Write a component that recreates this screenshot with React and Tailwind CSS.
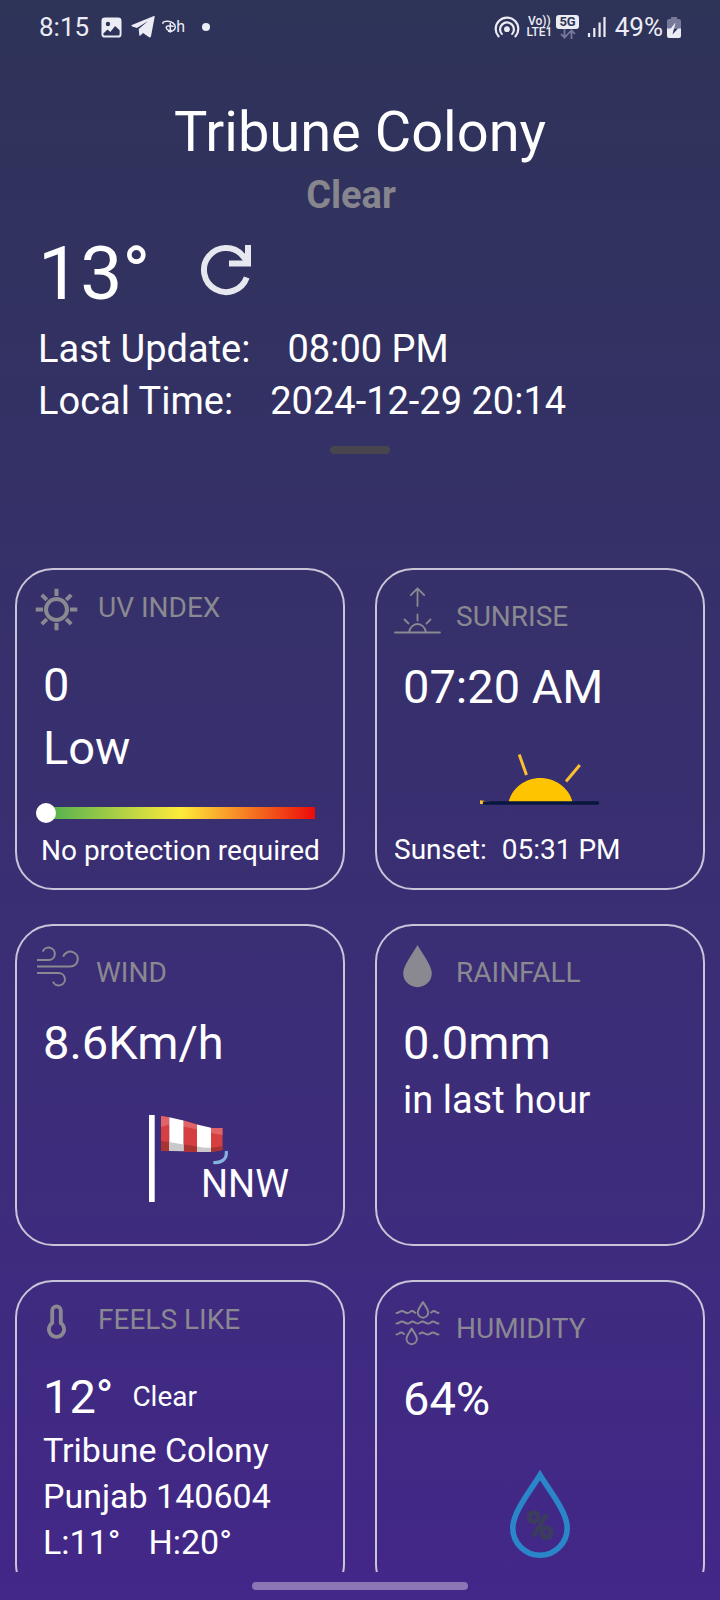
const GREY = "#8a8890";

function StatusBar() {
  return (
    <header className="flex items-center justify-between pl-[39px] pr-[39px] pt-[11px] text-[26px] leading-[32px] text-[#ececf4]">
      <div className="flex items-center">
        <time>8:15</time>
        <svg className="ml-[12px] size-[21px]" viewBox="0 0 22 22" aria-hidden="true">
          <path
            fillRule="evenodd"
            fill="currentColor"
            d="M4 0.5h14a3.500 3.500 0 0 1 3.500 3.500v14a3.500 3.500 0 0 1-3.500 3.500H4A3.500 3.500 0 0 1 .5 18V4A3.500 3.500 0 0 1 4 .5zM2.500 16.500v.8L6.800 13.200l3 2.600 5-6.300 4.700 4.500v4.200a1.300 1.300 0 0 1-1.300 1.300H3.800a1.300 1.300 0 0 1-1.300-1.300zM7.300 5a2.300 2.300 0 1 0 0 4.600 2.300 2.300 0 0 0 0-4.600z"
          />
        </svg>
        <svg className="ml-[9px] h-[22px] w-[24px]" viewBox="0 0 24 22" aria-hidden="true">
          <path
            fill="currentColor"
            d="M23.700.8 20 20.200c-.3 1.200-1.200 1.500-2.200.9l-5.700-4.200-2.700 2.700c-.4.3-1 .2-1.100-.4l-.6-6.200 9.400-8-11.200 7-4.700-1.600c-1.200-.4-1.200-1.200.2-1.700L22.300.2c1-.4 1.600 0 1.400.6z"
          />
        </svg>
        <div className="ml-[7px] flex items-center" role="img" aria-label="Disney+ Hotstar">
          <svg className="h-[14px] w-[14px]" viewBox="0 0 14 14" aria-hidden="true">
            <g fill="none" stroke="currentColor" strokeLinecap="round">
              <path strokeWidth="1.500" d="M1 3.200C.6 1.800 3 1 6 1.300c4.500.4 7.600 3 7.200 6.300-.3 2.700-3.600 4.300-6.500 3.700" />
              <path strokeWidth="1.500" d="M8.300 3.500v8.500M11 6.200C7 5.200 4.200 6 4.200 7.500c0 1.800 2.400 3.300 5 3.100" />
            </g>
          </svg>
          <span className="text-[16px] leading-[20px]">h</span>
        </div>
        <span className="ml-[17px] size-2 rounded-full bg-current" />
      </div>
      <div className="flex items-center">
        <svg className="h-[22px] w-[26px]" viewBox="0 0 26 22" aria-hidden="true">
          <g fill="none" stroke="currentColor" strokeWidth="2.200" strokeLinecap="round">
            <path d="M4.500 20.300a11.300 11.300 0 1 1 17 0" />
            <path d="M7.800 17.900a6.900 6.900 0 1 1 10.400 0" />
          </g>
          <circle cx="13" cy="13.200" r="2.900" fill="currentColor" />
        </svg>
        <div className="ml-[6px] flex w-[26px] flex-col items-center text-[12px] font-medium leading-[11px]">
          <span>Vo))</span>
          <span>LTE1</span>
        </div>
        <div className="ml-[4px] flex flex-col items-center">
          <span className="rounded-[3px] bg-[#ececf4] px-[3px] text-[13px] font-bold leading-[14px] text-[#2e3358]">5G</span>
          <svg className="h-[10px] w-[16px]" viewBox="0 0 16 10" aria-hidden="true">
            <path fill="none" stroke="#77799a" strokeWidth="1.800" d="M4.500 0v8.500M1 5l3.500 3.700L8 5M11.500 10V1.500M8 5l3.500-3.700L15 5" />
          </svg>
        </div>
        <svg className="ml-[8px] h-[20px] w-[19px]" viewBox="0 0 19 20" aria-hidden="true">
          <path stroke="currentColor" strokeWidth="2.200" d="M2 20v-4M7.300 20v-9M12.600 20V5.500M17.500 20V0" />
        </svg>
        <span className="ml-[9px]">49%</span>
        <svg className="ml-[4px] h-[21px] w-[14px]" viewBox="0 0 14 21" aria-hidden="true">
          <path fill="#77799a" d="M4 0h6v2h2a2 2 0 0 1 2 2v8H0V4a2 2 0 0 1 2-2h2z" />
          <path fill="currentColor" d="M0 11.500h14V19a2 2 0 0 1-2 2H2a2 2 0 0 1-2-2z" />
          <path fill="#ececf4" d="M8.500 5.500 3 12.500h4z" />
          <path fill="#2e3358" d="M11 11.500H7l-1.500 6z" />
        </svg>
      </div>
    </header>
  );
}

function Card({ icon, label, high = false, children }) {
  return (
    <section className="flex h-[322px] flex-col rounded-[38px] border-2 border-[#cac4d8]">
      <div className={`flex shrink-0 items-start pl-[17px] pt-[17px] ${high ? "h-[87px] gap-[17px]" : "h-[89px] gap-[15px]"}`}>
        <svg className="size-[47px] shrink-0" viewBox="0 0 47 47" aria-hidden="true">
          {icon}
        </svg>
        <h2 className={`text-[28px] leading-[33px] text-[#8a8890] ${high ? "pt-1" : "pt-[13px]"}`}>{label}</h2>
      </div>
      {children}
    </section>
  );
}

function Value({ children }) {
  return <p className="text-[47px] leading-[55px]">{children}</p>;
}

const sunIcon = (
  <g transform="translate(22.500 22.500)" fill="none" stroke={GREY} strokeWidth="4">
    <circle r="10.500" />
    <path d="M0-20.800v7.300M0 20.800v-7.300M-20.800 0h7.300M20.800 0h-7.300M-14.700-14.700l5 5M14.700-14.700l-5 5M-14.700 14.700l5-5M14.700 14.700l-5-5" />
  </g>
);

const sunriseIcon = (
  <g fill="none" stroke={GREY} strokeWidth="1.800" strokeLinecap="round" strokeLinejoin="round">
    <path d="M1 45.500h45M15.200 45c.5-4.500 4-8 8.300-8s7.800 3.500 8.300 8M23.500 27.500v6M10.500 32.500l4 4M36.500 32.500l-4 4M23.500 19V1.500M16.800 8.200l6.700-6.900 6.700 6.900" />
  </g>
);

const windIcon = (
  <g fill="none" stroke={GREY} strokeWidth="2">
    <path d="M3 17h12a6.200 6.200 0 1 0-6.200-8.300M3 23.500h33.500a7.500 7.500 0 1 0-7.300-9.800M3 30h21.500a6.200 6.200 0 1 1-5.500 8.600" />
  </g>
);

const rainIcon = (
  <path fill={GREY} d="M23.500 2C28 10 37.800 22.500 37.800 30.200a14.300 14 0 0 1-28.600 0C9.200 22.500 19 10 23.500 2z" />
);

const thermometerIcon = (
  <path
    fill="none"
    stroke={GREY}
    strokeWidth="3.800"
    d="M18.200 24V11.700a4.300 4.300 0 0 1 8.600 0V24a7.600 7.600 0 1 1-8.600 0z"
  />
);

const humidityIcon = (
  <g fill="none" stroke={GREY} strokeWidth="1.900" strokeLinejoin="round" strokeLinecap="round">
    <path d="M29 3c1.800 3.500 5.200 7 5.200 10.500a5.200 5.200 0 0 1-10.400 0C23.800 10 27.200 6.500 29 3z" />
    <path d="M17.700 29.500c1.800 3.500 5.200 7 5.200 10.500a5.200 5.200 0 0 1-10.400 0c0-3.500 3.400-7 5.200-10.500z" />
    <path d="M2.500 14c2.500 0 3.500-2 5.500-2s3 2 5.500 2 2.500-2 4.500-2 2 1.500 3.500 1.800M37 13.500c1-.5 1.500-1.500 3-1.500s2 1.500 4.500 2" />
    <path d="M2.500 24.500c2.500 0 3.500-2 5.500-2s3 2 5.500 2 3-2 5-2 3 2 5 2 3-2 5-2 3 2 5.500 2 3-2 5-2 3 2 5.500 2" />
    <path d="M2.500 35.500c2.500 0 2.500-2 4.500-2s2 1 3 1.500M25.500 34.500c1 0 1.500-1 3-1s2.500 2 5 2 3.500-2 5.500-2 3 2 5.500 2" />
  </g>
);

export default function App() {
  return (
    <div className="flex h-screen flex-col overflow-hidden bg-linear-to-b from-[#2e3358] to-[#432789] font-[Roboto,sans-serif] text-white">
      <StatusBar />
      <main className="min-h-0 flex-1 overflow-hidden">
        <div className="flex flex-col items-center pt-[56px]">
          <h1 className="text-[56px] leading-[66px]">Tribune Colony</h1>
          <p className="mt-2 pr-[18px] text-[38px] font-bold leading-[44px] text-[#87868e]">Clear</p>
        </div>
        <div className="px-[38px]">
          <div className="mt-3 flex items-center gap-[50px]">
            <span className="text-[75px] leading-[88px]">13°</span>
            <button type="button" aria-label="Refresh" className="mb-[6px]">
              <svg className="size-[52px]" viewBox="0 0 52 52" aria-hidden="true">
                <g fill="none" stroke="#e7e8ef" strokeWidth="6">
                  <path d="M46.700 33.500A22 22 0 1 1 42.500 11.500l5 6" />
                  <path d="M48 1v18.500H29" />
                </g>
              </svg>
            </button>
          </div>
          <dl className="mt-[6px] text-[38px] leading-[52px]">
            <div className="flex gap-[37px]">
              <dt>Last Update:</dt>
              <dd>08:00 PM</dd>
            </div>
            <div className="flex gap-[37px]">
              <dt>Local Time:</dt>
              <dd>2024-12-29 20:14</dd>
            </div>
          </dl>
        </div>
        <div className="mx-auto mt-[19px] h-2 w-[60px] rounded-full bg-[#49454f]" />

        <div className="mt-[114px] grid grid-cols-2 gap-x-[30px] gap-y-[34px] px-[15px]">
          <Card icon={sunIcon} label="UV INDEX" high>
            <div className="flex flex-col gap-2 px-[26px]">
              <Value>0</Value>
              <Value>Low</Value>
            </div>
            <input
              type="range"
              aria-label="UV index"
              min="0"
              max="11"
              defaultValue="0"
              className="ml-[19px] mr-[28px] mt-7 h-5 appearance-none bg-transparent [&::-webkit-slider-runnable-track]:h-3 [&::-webkit-slider-runnable-track]:rounded-l-full [&::-webkit-slider-runnable-track]:bg-[linear-gradient(90deg,#4caf50_9px,#ffeb3b_52%,#ec0a0a)] [&::-webkit-slider-thumb]:-mt-1 [&::-webkit-slider-thumb]:size-5 [&::-webkit-slider-thumb]:appearance-none [&::-webkit-slider-thumb]:rounded-full [&::-webkit-slider-thumb]:bg-white"
            />
            <p className="mt-[11px] whitespace-nowrap pl-[24px] text-[28px] leading-[33px]">No protection required</p>
          </Card>

          <Card icon={sunriseIcon} label="SUNRISE">
            <div className="px-[26px]">
              <Value>07:20 AM</Value>
            </div>
            <svg className="mx-auto mt-[40px] h-[52px] w-[120px] shrink-0" viewBox="0 0 120 52" aria-hidden="true">
              <path fill="#ffc400" d="M28.500 48C32 34 45 24 60.300 24S89 34 92.500 48z" />
              <path fill="none" stroke="#fbc02d" strokeWidth="3" d="M39.200.5l7.300 20.500M99.800 11 86 27.500" />
              <path fill="#fbc02d" d="M0 46.200l10 1.500-7 2.300H0z" />
              <path stroke="#07173f" strokeWidth="3.600" strokeLinecap="round" d="M4.500 49h113" />
            </svg>
            <dl className="mt-[27px] flex gap-[15px] pl-[17px] text-[28px] leading-[33px]">
              <dt>Sunset:</dt>
              <dd>05:31 PM</dd>
            </dl>
          </Card>

          <Card icon={windIcon} label="WIND">
            <div className="px-[26px]">
              <Value>8.6Km/h</Value>
            </div>
            <div className="mt-[45px] flex items-end pl-[132px]">
              <svg className="mb-1 h-[87px] w-[80px] shrink-0" viewBox="0 0 80 87" aria-hidden="true">
                <path fill="#fff" d="M0 0h5.700v87H0z" />
                <path fill="#d63f3f" d="M12 1l8.300 1.200V36L12 35.700zM34.500 5.500l13.500 4V37l-13.500-.5zM62 13h11.500v22L62 37z" />
                <path fill="#e06467" d="M12 1l8.300 1.200v7.300L12 12zM34.500 5.500l13.500 4v5l-13.500-3zM62 13h11.500v7L62 18z" />
                <path fill="#a93333" d="M12 26l8.300 1v9L12 35.700zM34.500 29.500l13.500 2V37l-13.500-.5zM62 33l11.500-2v4L62 37z" />
                <path fill="#fff" d="M20.300 2.200l14.200 3.300V36l-14.200-.3zM48 9.500l14 3.300V37H48z" />
                <path fill="#c9c9c9" d="M20.300 27l14.200 2.500v6.700l-14.200-.2zM48 31.500c5 1 9 1.500 14 1.200V37H48z" />
                <path fill="none" stroke="#84b4de" strokeWidth="3.200" d="M77.300 36c.8 8-4.300 12.300-13 11.500" />
              </svg>
              <p className="-ml-7 text-[38px] leading-[44px]">NNW</p>
            </div>
          </Card>

          <Card icon={rainIcon} label="RAINFALL">
            <div className="px-[26px]">
              <Value>0.0mm</Value>
              <p className="mt-2 text-[38px] leading-[44px]">in last hour</p>
            </div>
          </Card>

          <Card icon={thermometerIcon} label="FEELS LIKE" high>
            <div className="px-[26px]">
              <div className="flex items-center gap-[19px]">
                <Value>12°</Value>
                <span className="text-[28px] leading-[33px]">Clear</span>
              </div>
              <div className="mt-[3px] text-[34px] leading-[46px]">
                <p>Tribune Colony</p>
                <p>Punjab 140604</p>
                <p className="flex gap-[28px]">
                  <span>L:11°</span>
                  <span>H:20°</span>
                </p>
              </div>
            </div>
          </Card>

          <Card icon={humidityIcon} label="HUMIDITY">
            <div className="px-[26px]">
              <Value>64%</Value>
            </div>
            <svg className="mx-auto mt-[44px] h-[88px] w-[60px] shrink-0" viewBox="0 0 60 88" aria-hidden="true">
              <path
                fill="none"
                stroke="#2a86c8"
                strokeWidth="5.600"
                d="M30 5C21 20 2.800 42 2.800 58a27.200 27.200 0 0 0 54.400 0C57.200 42 39 20 30 5z"
              />
              <text
                x="30"
                y="69"
                textAnchor="middle"
                fontSize="38"
                fontWeight="700"
                fontFamily="Roboto, sans-serif"
                fill="#3b3d5e"
                stroke="#3b3d5e"
                strokeWidth="1.600"
              >
                %
              </text>
            </svg>
          </Card>
        </div>
      </main>
      <footer className="flex h-7 shrink-0 justify-center pt-[10px]">
        <div className="h-2 w-[216px] rounded-full bg-[#8b76b6]" />
      </footer>
    </div>
  );
}
